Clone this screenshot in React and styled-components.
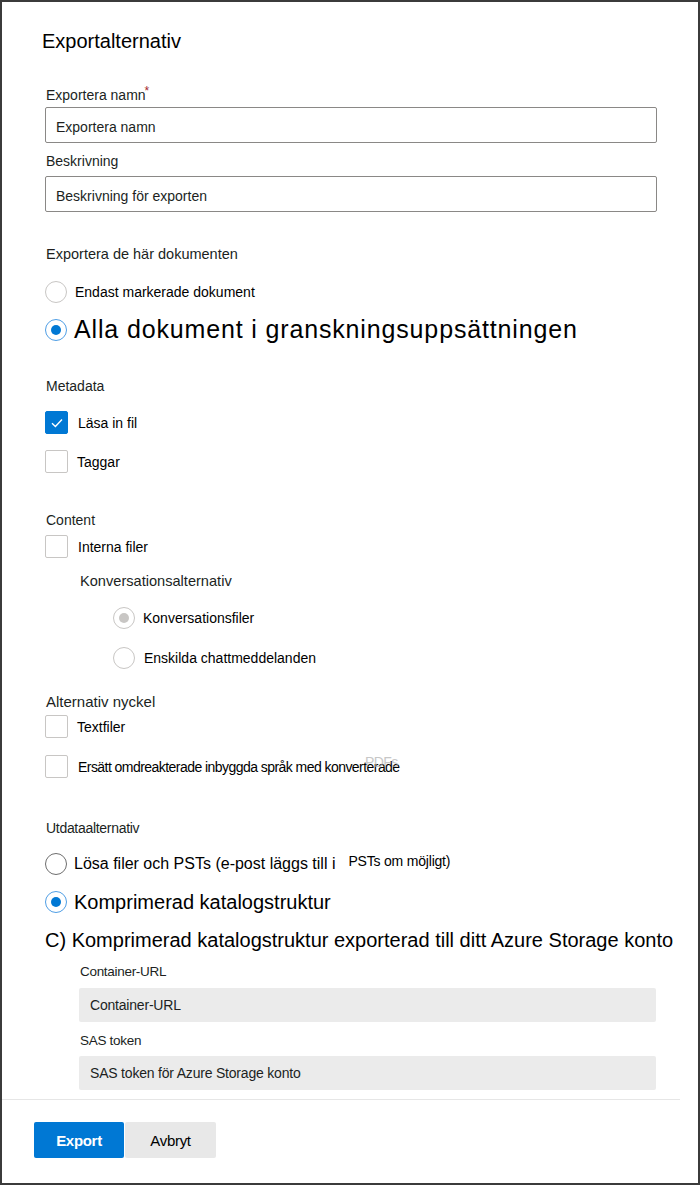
import React from "react"
import styled, { createGlobalStyle } from "styled-components"

const GlobalStyle = createGlobalStyle`
  html, body {
    margin: 0;
    padding: 0;
    background: #ffffff;
  }
  body {
    font-family: "Liberation Sans", Arial, sans-serif;
    color: #201f1e;
  }
  * {
    box-sizing: border-box;
  }
`

const Frame = styled.div`
  width: 700px;
  height: 1185px;
  border: 2px solid #3b3b3b;
  display: flex;
  flex-direction: column;
  overflow: hidden;
`

const Body = styled.div`
  padding: 27px 43px 0 43px;
  display: flex;
  flex-direction: column;
`

const Title = styled.h1`
  margin: 0 0 0 -3px;
  font-size: 20px;
  line-height: 24px;
  font-weight: 400;
  color: #000;
`

const Label = styled.div`
  margin-top: ${(p) => p.$mt || 0}px;
  margin-left: ${(p) => p.$indent || 1}px;
  font-size: ${(p) => p.$size || 14}px;
  line-height: 20px;
  color: #201f1e;
  letter-spacing: ${(p) => p.$ls || 0}px;
`

const Required = styled.span`
  color: #a4262c;
  font-size: 12px;
  vertical-align: top;
  position: relative;
  top: -4px;
  margin-left: -1px;
`

const TextInput = styled.div`
  margin-top: ${(p) => p.$mt || 0}px;
  height: 36px;
  width: 612px;
  border: 1px solid #8a8886;
  border-radius: 2px;
  padding: 4px 10px 0 10px;
  display: flex;
  align-items: center;
  font-size: 14px;
  color: #201f1e;
`

const Row = styled.div`
  margin-top: ${(p) => p.$mt || 0}px;
  margin-left: ${(p) => p.$indent || 0}px;
  display: flex;
  align-items: center;
  min-height: 22px;
  position: relative;
`

const Radio = styled.span`
  flex: none;
  width: 22px;
  height: 22px;
  border-radius: 50%;
  border: 1px solid ${(p) => (p.$checked ? "#4f9ee5" : p.$dark ? "#6e6e6e" : "#c8c6c4")};
  display: flex;
  align-items: center;
  justify-content: center;
  background: #fff;

  &::after {
    content: "";
    width: 10px;
    height: 10px;
    border-radius: 50%;
    background: ${(p) => (p.$checked ? "#0078d4" : p.$disabled ? "#c8c6c4" : "transparent")};
  }
`

const Box = styled.span`
  flex: none;
  width: 23px;
  height: 23px;
  border-radius: 2px;
  border: 1px solid ${(p) => (p.$checked ? "#0078d4" : "#c8c6c4")};
  background: ${(p) => (p.$checked ? "#0078d4" : "#fff")};
  display: flex;
  align-items: center;
  justify-content: center;
`

const OptionText = styled.span`
  margin-left: ${(p) => p.$gap || 8}px;
  font-size: ${(p) => p.$size || 14}px;
  line-height: ${(p) => (p.$size ? p.$size + 8 : 20)}px;
  color: #000;
  letter-spacing: ${(p) => p.$ls || 0}px;
  white-space: nowrap;
`

const Small = styled.span`
  font-size: 14px;
  margin-left: 13px;
  letter-spacing: -0.2px;
  position: relative;
  top: -3px;
`

const Ghost = styled.span`
  position: absolute;
  left: 320px;
  top: -3px;
  font-size: 14px;
  color: #b0b0b0;
  opacity: 0.7;
`

const Heading = styled.div`
  margin-top: ${(p) => p.$mt || 0}px;
  font-size: 20px;
  line-height: 26px;
  color: #000;
  white-space: nowrap;
`

const Nested = styled.div`
  margin-left: 34px;
  display: flex;
  flex-direction: column;
`

const GreyInput = styled.div`
  margin-top: ${(p) => p.$mt || 0}px;
  height: 34px;
  width: 577px;
  background: #ebebeb;
  border-radius: 2px;
  padding: 0 11px;
  display: flex;
  align-items: center;
  font-size: 14px;
  color: #201f1e;
  letter-spacing: -0.2px;
`

const Footer = styled.div`
  margin-top: 9px;
  margin-right: 18px;
  border-top: 1px solid #e6e6e6;
  padding: 22px 0 0 32px;
  display: flex;
`

const Button = styled.button`
  height: 36px;
  width: ${(p) => p.$w}px;
  border: none;
  border-radius: 2px;
  font-family: inherit;
  font-size: 15px;
  letter-spacing: -0.3px;
  font-weight: ${(p) => (p.$primary ? 700 : 400)};
  background: ${(p) => (p.$primary ? "#0078d4" : "#e8e8e8")};
  color: ${(p) => (p.$primary ? "#fff" : "#000")};
  margin-right: 1px;
  cursor: pointer;
`

const Check = () => (
  <svg width="14" height="14" viewBox="0 0 14 14">
    <path d="M2 7.2 L5.4 10.4 L12 3.6" fill="none" stroke="#fff" strokeWidth="1.4" />
  </svg>
)

export default function App() {
  return (
    <>
      <GlobalStyle />
      <Frame>
        <Body>
          <Title>Exportalternativ</Title>

          <Label $mt={32}>
            Exportera namn<Required>*</Required>
          </Label>
          <TextInput $mt={2}>Exportera namn</TextInput>
          <Label $mt={8}>Beskrivning</Label>
          <TextInput $mt={5}>Beskrivning för exporten</TextInput>

          <Label $mt={32} $size={14.5}>Exportera de här dokumenten</Label>
          <Row $mt={17}>
            <Radio />
            <OptionText>Endast markerade dokument</OptionText>
          </Row>
          <Row $mt={10}>
            <Radio $checked />
            <OptionText $size={25} $gap={7} $ls={0.85}>Alla dokument i granskningsuppsättningen</OptionText>
          </Row>

          <Label $mt={30}>Metadata</Label>
          <Row $mt={15}>
            <Box $checked>
              <Check />
            </Box>
            <OptionText $gap={10}>Läsa in fil</OptionText>
          </Row>
          <Row $mt={16}>
            <Box />
            <OptionText $gap={9}>Taggar</OptionText>
          </Row>

          <Label $mt={37}>Content</Label>
          <Row $mt={5}>
            <Box />
            <OptionText $gap={10}>Interna filer</OptionText>
          </Row>
          <Nested>
            <Label $mt={13} $size={14.6}>Konversationsalternativ</Label>
            <Row $mt={16} $indent={34}>
              <Radio $disabled />
              <OptionText $gap={8}>Konversationsfiler</OptionText>
            </Row>
            <Row $mt={18} $indent={34}>
              <Radio />
              <OptionText $gap={9}>Enskilda chattmeddelanden</OptionText>
            </Row>
          </Nested>

          <Label $mt={23} $size={15}>Alternativ nyckel</Label>
          <Row $mt={3}>
            <Box />
            <OptionText $gap={9}>Textfiler</OptionText>
          </Row>
          <Row $mt={17}>
            <Box />
            <OptionText $gap={10} $ls={-0.55}>
              Ersätt omdreakterade inbyggda språk med konverterade
              <Ghost>PDFs</Ghost>
            </OptionText>
          </Row>

          <Label $mt={40} $size={14} $ls={-0.3}>Utdataalternativ</Label>
          <Row $mt={14}>
            <Radio $dark />
            <OptionText $size={16} $gap={7}>
              Lösa filer och PSTs (e-post läggs till i<Small>PSTs om möjligt)</Small>
            </OptionText>
          </Row>
          <Row $mt={12}>
            <Radio $checked />
            <OptionText $size={20} $gap={7}>Komprimerad katalogstruktur</OptionText>
          </Row>
          <Heading $mt={11}>C) Komprimerad katalogstruktur exporterad till ditt Azure Storage konto</Heading>

          <Nested>
            <Label $mt={9} $size={13.5} $ls={-0.3}>Container-URL</Label>
            <GreyInput $mt={6}>Container-URL</GreyInput>
            <Label $mt={9} $size={13.5} $ls={-0.3}>SAS token</Label>
            <GreyInput $mt={5}>SAS token för Azure Storage konto</GreyInput>
          </Nested>
        </Body>
        <Footer>
          <Button $primary $w={90}>Export</Button>
          <Button $w={91}>Avbryt</Button>
        </Footer>
      </Frame>
    </>
  )
}
